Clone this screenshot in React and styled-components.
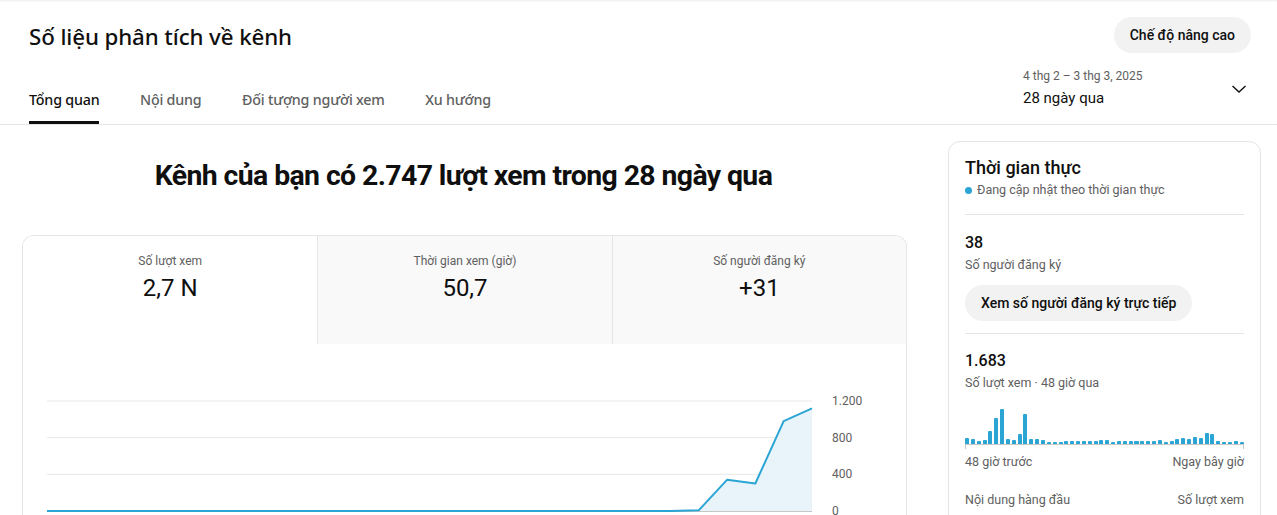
import React from "react";
import styled, { createGlobalStyle } from "styled-components";

const GlobalStyle = createGlobalStyle`
  * { box-sizing: border-box; }
  html, body { margin: 0; padding: 0; background: #fff; }
  body { font-family: Roboto, "Noto Sans", Arial, sans-serif; color: #0f0f0f; overflow: hidden; }
`;

const Page = styled.div`
  width: 1277px;
  height: 515px;
  overflow: hidden;
  background: #fff;
  box-shadow: inset 0 2px 2px -1px rgba(0, 0, 0, 0.08);
`;

const Header = styled.header`
  border-bottom: 1px solid #e5e5e5;
  padding: 0 26px 0 29px;
`;

const TitleRow = styled.div`
  display: flex;
  align-items: center;
  justify-content: space-between;
  padding-top: 17px;
  height: 52px;
`;

const Title = styled.h1`
  margin: 0;
  font-family: "Noto Sans", sans-serif;
  font-weight: 500;
  font-size: 22.3px;
  letter-spacing: -0.1px;
  line-height: 32px;
  margin-top: 4px;
`;

const PillButton = styled.button`
  border: 0;
  background: #f2f2f2;
  border-radius: 18px;
  height: 36px;
  padding: 0 16px;
  font-family: Roboto, sans-serif;
  font-weight: 500;
  font-size: 14px;
  color: #0f0f0f;
  cursor: pointer;
`;

const NavRow = styled.div`
  display: flex;
  align-items: flex-end;
  justify-content: space-between;
  height: 72px;
`;

const Tabs = styled.nav`
  display: flex;
  gap: 40.5px;
`;

const Tab = styled.div`
  font-family: "Noto Sans", sans-serif;
  font-size: 14.3px;
  font-weight: 500;
  letter-spacing: -0.2px;
  color: ${(p) => (p.$active ? "#0f0f0f" : "#606060")};
  padding-bottom: 10px;
  border-bottom: 3px solid ${(p) => (p.$active ? "#0f0f0f" : "transparent")};
  line-height: 22px;
`;

const DatePicker = styled.div`
  width: 228px;
  display: flex;
  align-items: center;
  justify-content: space-between;
  align-self: flex-start;
  margin-top: 16px;
`;

const DateText = styled.div`
  display: flex;
  flex-direction: column;
`;

const DateRange = styled.span`
  font-size: 12px;
  color: #606060;
  line-height: 16px;
`;

const DateLabel = styled.span`
  font-size: 15px;
  color: #0f0f0f;
  line-height: 22px;
  margin-top: 3px;
`;

const Body = styled.main`
  display: flex;
  gap: 41px;
  padding: 17px 16px 0 22px;
`;

const LeftCol = styled.section`
  width: 885px;
  display: flex;
  flex-direction: column;
`;

const Headline = styled.h2`
  margin: 0;
  text-align: center;
  font-family: Roboto, sans-serif;
  font-weight: 700;
  font-size: 28.4px;
  letter-spacing: -0.6px;
  line-height: 36px;
  padding: 16px 2px 0 0;
  height: 93px;
`;

const MetricsCard = styled.div`
  border: 1px solid #e5e5e5;
  border-bottom: 0;
  border-radius: 12px 12px 0 0;
  overflow: hidden;
  height: 290px;
`;

const MetricTabs = styled.div`
  display: grid;
  grid-template-columns: repeat(3, 1fr);
  height: 108px;
`;

const MetricTab = styled.div`
  background: ${(p) => (p.$active ? "#fff" : "#f9f9f9")};
  border-left: ${(p) => (p.$first ? "0" : "1px solid #e5e5e5")};
  display: flex;
  flex-direction: column;
  align-items: center;
  padding-top: 17px;
`;

const MetricLabel = styled.span`
  font-size: 12px;
  color: #606060;
  line-height: 16px;
`;

const MetricValue = styled.span`
  font-size: 24px;
  line-height: 32px;
  margin-top: 3px;
  color: #0f0f0f;
`;

const ChartWrap = styled.div`
  padding: 0 0 0 24px;
  height: 180px;
`;

const Side = styled.aside`
  width: 314px;
  border: 1px solid #e5e5e5;
  border-radius: 12px;
  padding: 14px 16px 0 16px;
  height: 400px;
  margin-top: -1px;
`;

const SideTitle = styled.h3`
  margin: 0;
  font-size: 18px;
  font-weight: 500;
  line-height: 24px;
`;

const LiveNote = styled.div`
  display: flex;
  align-items: center;
  gap: 5px;
  font-size: 12.5px;
  color: #606060;
  line-height: 18px;
  margin-top: 1px;
`;

const Dot = styled.span`
  width: 7px;
  height: 7px;
  border-radius: 50%;
  background: #2ba5d4;
`;

const Divider = styled.hr`
  border: 0;
  border-top: 1px solid #e5e5e5;
  margin: ${(p) => p.$m || "15px 0 0"};
`;

const Stat = styled.div`
  font-size: 16px;
  font-weight: 500;
  line-height: 22px;
  margin-top: ${(p) => p.$mt || "17px"};
`;

const StatCaption = styled.div`
  font-size: 12.5px;
  color: #606060;
  line-height: 18px;
  margin-top: 2px;
`;

const GreyButton = styled.button`
  margin-top: 11px;
  border: 0;
  background: #f2f2f2;
  border-radius: 18px;
  height: 36px;
  padding: 0 16px;
  font-family: Roboto, sans-serif;
  font-weight: 500;
  font-size: 14px;
  color: #0f0f0f;
`;

const Bars = styled.div`
  margin-top: 16px;
  height: 37px;
  display: flex;
  align-items: flex-end;
  gap: 1.8px;
  border-bottom: 1px solid #c8c8c8;
  position: relative;
`;

const Bar = styled.span`
  flex: 1;
  background: #2ba5d4;
  border-radius: 1px 1px 0 0;
`;

const EdgeTick = styled.span`
  position: absolute;
  bottom: -5px;
  width: 1px;
  height: 5px;
  background: #c8c8c8;
  ${(p) => (p.$right ? "right: 0;" : "left: 0;")}
`;

const SplitRow = styled.div`
  display: flex;
  justify-content: space-between;
  font-size: 12.5px;
  color: #606060;
  line-height: 18px;
  margin-top: ${(p) => p.$mt || "8px"};
`;

const Chevron = () => (
  <svg width="24" height="24" viewBox="0 0 24 24" fill="none">
    <path d="M5.5 9l6.5 6 6.5-6" stroke="#0f0f0f" strokeWidth="1.4" />
  </svg>
);

const dailyViews = [
  0, 0, 0, 0, 0, 0, 0, 0, 0, 0, 0, 0, 0, 0, 0, 0, 0, 0, 0, 0, 0, 0, 0, 7, 340, 300, 980,
  1120,
];

const hourlyViews = [
  5, 4, 2, 3, 12, 25, 34, 4, 3, 9, 29, 4, 4, 3, 1, 1, 1, 2, 2, 2, 2, 2, 2, 3, 3, 1, 2, 2,
  2, 2, 2, 2, 2, 3, 1, 2, 4, 5, 4, 6, 5, 10, 9, 2, 1, 1, 2, 1,
];

const ViewsChart = () => {
  const x0 = 0;
  const x1 = 765;
  const yZero = 167;
  const scale = 110 / 1200;
  const step = (x1 - x0) / (dailyViews.length - 1);
  const pts = dailyViews.map((v, i) => [x0 + i * step, yZero - v * scale]);
  const line = pts.map((p) => p.join(",")).join(" ");
  const area = `${pts[21][0]},${yZero} ${pts.slice(21).map((p) => p.join(",")).join(" ")} ${x1},${yZero}`;
  const grid = [1200, 800, 400];
  return (
    <svg width="861" height="180" viewBox="0 0 861 180">
      {grid.map((g) => (
        <line key={g} x1="0" x2={x1} y1={yZero - g * scale} y2={yZero - g * scale} stroke="#e8e8e8" strokeWidth="1" />
      ))}
      <line x1="0" x2={x1} y1={yZero} y2={yZero} stroke="#909090" strokeWidth="1" />
      <polygon points={area} fill="#e8f4fa" />
      <polyline points={line} fill="none" stroke="#2ba5d4" strokeWidth="2" strokeLinejoin="round" />
      {[1200, 800, 400, 0].map((g) => (
        <text
          key={g}
          x="785"
          y={yZero - g * scale + 4}
          fontFamily="Roboto, sans-serif"
          fontSize="12"
          fill="#606060"
        >
          {g === 1200 ? "1.200" : g}
        </text>
      ))}
    </svg>
  );
};

export default function App() {
  return (
    <>
      <GlobalStyle />
      <Page>
        <Header>
          <TitleRow>
            <Title>Số liệu phân tích về kênh</Title>
            <PillButton>Chế độ nâng cao</PillButton>
          </TitleRow>
          <NavRow>
            <Tabs>
              <Tab $active>Tổng quan</Tab>
              <Tab>Nội dung</Tab>
              <Tab>Đối tượng người xem</Tab>
              <Tab>Xu hướng</Tab>
            </Tabs>
            <DatePicker>
              <DateText>
                <DateRange>4 thg 2 – 3 thg 3, 2025</DateRange>
                <DateLabel>28 ngày qua</DateLabel>
              </DateText>
              <Chevron />
            </DatePicker>
          </NavRow>
        </Header>
        <Body>
          <LeftCol>
            <Headline>Kênh của bạn có 2.747 lượt xem trong 28 ngày qua</Headline>
            <MetricsCard>
              <MetricTabs>
                <MetricTab $active $first>
                  <MetricLabel>Số lượt xem</MetricLabel>
                  <MetricValue>2,7 N</MetricValue>
                </MetricTab>
                <MetricTab>
                  <MetricLabel>Thời gian xem (giờ)</MetricLabel>
                  <MetricValue>50,7</MetricValue>
                </MetricTab>
                <MetricTab>
                  <MetricLabel>Số người đăng ký</MetricLabel>
                  <MetricValue>+31</MetricValue>
                </MetricTab>
              </MetricTabs>
              <ChartWrap>
                <ViewsChart />
              </ChartWrap>
            </MetricsCard>
          </LeftCol>
          <Side>
            <SideTitle>Thời gian thực</SideTitle>
            <LiveNote>
              <Dot />
              Đang cập nhật theo thời gian thực
            </LiveNote>
            <Divider />
            <Stat>38</Stat>
            <StatCaption>Số người đăng ký</StatCaption>
            <GreyButton>Xem số người đăng ký trực tiếp</GreyButton>
            <Divider $m="12px 0 0" />
            <Stat $mt="16px">1.683</Stat>
            <StatCaption>Số lượt xem · 48 giờ qua</StatCaption>
            <Bars>
              {hourlyViews.map((h, i) => (
                <Bar key={i} style={{ height: `${h + 1}px` }} />
              ))}
              <EdgeTick />
              <EdgeTick $right />
            </Bars>
            <SplitRow $mt="8px">
              <span>48 giờ trước</span>
              <span>Ngay bây giờ</span>
            </SplitRow>
            <SplitRow $mt="20px">
              <span>Nội dung hàng đầu</span>
              <span>Số lượt xem</span>
            </SplitRow>
          </Side>
        </Body>
      </Page>
    </>
  );
}
